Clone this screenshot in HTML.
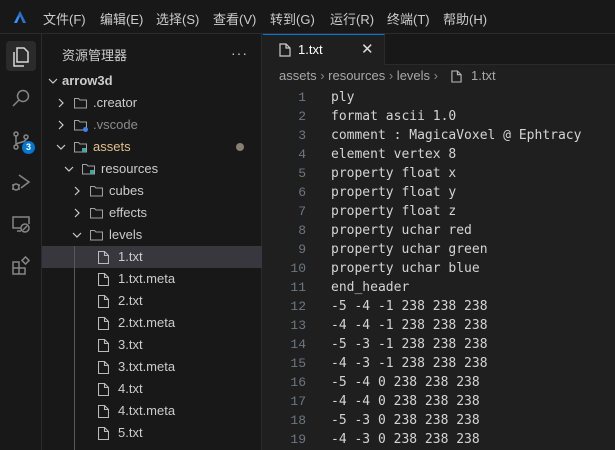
<!DOCTYPE html>
<html><head><meta charset="utf-8"><style>
*{margin:0;padding:0;box-sizing:border-box}
body{width:615px;height:450px;overflow:hidden;background:#1f1f1f;font-family:"Liberation Sans","Noto Sans CJK SC",sans-serif;color:#ccc;position:relative}
.abs{position:absolute}
svg{display:block}
#title{left:0;top:0;width:615px;height:34px;background:#181818;border-bottom:1px solid #2b2b2b}
#title span{position:absolute;top:9px;font-size:13px;color:#ccc}
#act{left:0;top:34px;width:42px;height:416px;background:#181818;border-right:1px solid #2b2b2b}
#side{left:42px;top:34px;width:220px;height:416px;background:#181818;border-right:1px solid #2b2b2b}
.row{position:absolute;left:0;width:220px;height:22px;font-size:13px;line-height:22px;color:#ccc}
.row .t{position:absolute;top:0}
.chev{position:absolute;top:6px}
.ic{position:absolute;top:5px}
#tabs{left:263px;top:34px;width:352px;height:31px;background:#181818;border-bottom:1px solid #2b2b2b}
#tab{left:263px;top:34px;width:122px;height:31px;background:#1f1f1f;border-top:1px solid #0078d4;border-right:1px solid #2b2b2b}
#crumb{left:263px;top:65px;width:352px;height:22px;font-size:13px;color:#a9a9a9}
.ln{position:absolute;left:263px;width:43px;text-align:right;font-family:"Liberation Mono",monospace;font-size:13px;color:#6e7681}
.cd{position:absolute;left:331px;font-family:"DejaVu Sans Mono","Liberation Mono",monospace;font-size:13px;color:#d4d4d4;white-space:pre}
</style></head><body>
<div id="title" class="abs">
<svg class="abs" style="left:13px;top:10px" width="14" height="14" viewBox="0 0 14 14"><path d="M7 1L1 13h3L7 6l3 7h3z" fill="#3794ff"/><path d="M7 1L4 7l3-1 3 7h3z" fill="#1a5fb4" opacity=".6"/></svg>
<span style="left:43px">文件(F)</span><span style="left:100px">编辑(E)</span><span style="left:156px">选择(S)</span><span style="left:213px">查看(V)</span><span style="left:270px">转到(G)</span><span style="left:330px">运行(R)</span><span style="left:387px">终端(T)</span><span style="left:443px">帮助(H)</span>
</div>
<div id="act" class="abs">
<div class="abs" style="left:6px;top:7px;width:30px;height:30px;background:#2b2b2b;border-radius:4px"></div>
<svg class="abs" style="left:10px;top:12px" width="22" height="22" viewBox="0 0 22 22" fill="none" stroke="#d7d7d7" stroke-width="1.5"><path d="M7 2h7l4 4v10H7z"/><path d="M4 6v14h10"/></svg>
<svg class="abs" style="left:11px;top:54px" width="20" height="20" viewBox="0 0 20 20" fill="none" stroke="#868686" stroke-width="1.5"><circle cx="12" cy="8" r="5.5"/><path d="M8 12l-6 6"/></svg>
<svg class="abs" style="left:11px;top:96px" width="20" height="20" viewBox="0 0 20 20" fill="none" stroke="#868686" stroke-width="1.5"><circle cx="5" cy="4" r="2"/><circle cx="5" cy="17" r="2"/><circle cx="15" cy="7" r="2"/><path d="M5 6v9M15 9c0 4-10 3-10 6"/></svg>
<div class="abs" style="left:22px;top:107px;width:13px;height:13px;background:#0078d4;border-radius:7px;color:#fff;font-size:9px;font-weight:bold;text-align:center;line-height:13px">3</div>
<svg class="abs" style="left:11px;top:138px" width="20" height="20" viewBox="0 0 20 20" fill="none" stroke="#868686" stroke-width="1.5"><path d="M8 3l10 7-8 6"/><circle cx="5" cy="15" r="3"/><path d="M1 13h2M1 17h2M7 13h2M7 17h2"/></svg>
<svg class="abs" style="left:11px;top:180px" width="20" height="20" viewBox="0 0 20 20" fill="none" stroke="#868686" stroke-width="1.5"><path d="M10 14H2V3h16v7M6 17h4"/><circle cx="14" cy="14" r="4"/><path d="M12 16l4-4"/></svg>
<svg class="abs" style="left:11px;top:222px" width="20" height="20" viewBox="0 0 20 20" fill="none" stroke="#868686" stroke-width="1.5"><path d="M2 6h6v12H2zM8 12h6v6H8M2 12h6"/><path d="M12 2l5 0 0 5-5 0z" transform="rotate(45 14.5 4.5)"/></svg>
</div>
<div id="side" class="abs">
<div class="abs" style="left:20px;top:11px;font-size:13px;color:#ccc">资源管理器</div>
<div class="abs" style="left:189px;top:11px;font-size:14px;color:#ccc;letter-spacing:1px">···</div>
<div class="abs" style="left:0;top:212px;width:220px;height:22px;background:#37373d"></div>
<div class="abs" style="left:32px;top:212px;width:1px;height:204px;background:#585858"></div>
<div id="tree"></div>
</div>
<div id="tabs" class="abs"></div>
<div id="tab" class="abs">
<svg class="abs" style="left:16px;top:8px" width="12" height="14" viewBox="0 0 12 14" fill="none" stroke="#ccc" stroke-width="1.2"><path d="M1 1h6l4 4v8H1zM7 1v4h4"/></svg>
<div class="abs" style="left:35px;top:7px;font-size:13px;color:#fff">1.txt</div>
<div class="abs" style="left:98px;top:5px;font-size:15px;color:#ddd">✕</div>
</div>
<div id="crumb" class="abs"><span class="abs" style="left:16px;top:3px;white-space:nowrap">assets <span style="color:#888">›</span> resources <span style="color:#888">›</span> levels <span style="color:#888">›</span></span>
<svg class="abs" style="left:188px;top:5px" width="11" height="13" viewBox="0 0 12 14" fill="none" stroke="#bbb" stroke-width="1.2"><path d="M1 1h6l4 4v8H1zM7 1v4h4"/></svg>
<span class="abs" style="left:208px;top:3px">1.txt</span></div>
<div id="code"></div>
<script>
var fold='<svg width="13" height="12" viewBox="0 0 13 12" fill="none" stroke="#a0a0a0" stroke-width="1.1"><path d="M.5 1.5h4l1.5 1.5h6.5v8H.5z"/></svg>';
var file='<svg width="11" height="13" viewBox="0 0 11 13" fill="none" stroke="#bbb" stroke-width="1.1"><path d="M.5.5h6l4 4v8H.5zM6.5.5v4h4"/></svg>';
function ch(open){return open?'<svg width="10" height="10" viewBox="0 0 10 10" fill="none" stroke="#ccc" stroke-width="1.2"><path d="M1 3l4 4 4-4"/></svg>':'<svg width="10" height="10" viewBox="0 0 10 10" fill="none" stroke="#ccc" stroke-width="1.2"><path d="M3 1l4 4-4 4"/></svg>'}
var rows=[[0,'arrow3d','open',0,'b'],[1,'.creator','c',1],[1,'.vscode','c',1,'v'],[1,'assets','open',1,'a'],[2,'resources','open',1,'r'],[3,'cubes','c',1],[3,'effects','c',1],[3,'levels','open',1],
[4,'1.txt',0,2],[4,'1.txt.meta',0,2],[4,'2.txt',0,2],[4,'2.txt.meta',0,2],[4,'3.txt',0,2],[4,'3.txt.meta',0,2],[4,'4.txt',0,2],[4,'4.txt.meta',0,2],[4,'5.txt',0,2]];
var h='';rows.forEach(function(r,i){var y=36+i*22,d=r[0],s='';
if(r[3]==0){s+='<span class="chev" style="left:6px">'+ch(1)+'</span><span class="t" style="left:20px;font-weight:bold">'+r[1]+'</span>';}
else if(r[3]==1){var cx=11+(d-1)*8;s+='<span class="chev" style="left:'+(cx+3)+'px">'+ch(r[2]=='open')+'</span><span class="ic" style="left:'+(cx+21)+'px">'+fold+'</span>';
if(r[4]=='v')s+='<span class="abs" style="left:'+(cx+30)+'px;top:13px;width:5px;height:5px;border-radius:3px;background:#3b82f6"></span>';
if(r[4]=='a'||r[4]=='r')s+='<span class="abs" style="left:'+(cx+29)+'px;top:12px;width:4px;height:4px;background:#3fa9a0"></span>';
var col=r[4]=='v'?'#8b8b8b':(r[4]=='a'?'#e2c08d':'#ccc');
s+='<span class="t" style="left:'+(cx+40)+'px;color:'+col+'">'+r[1]+'</span>';
if(r[4]=='a')s+='<span class="abs" style="left:194px;top:7px;width:8px;height:8px;border-radius:4px;background:#8a7f6e"></span>';}
else{s+='<span class="ic" style="left:56px">'+file+'</span><span class="t" style="left:76px">'+r[1]+'</span>';}
h+='<div class="row" style="top:'+y+'px">'+s+'</div>';});
document.getElementById('tree').innerHTML=h;
var L=['ply','format ascii 1.0','comment : MagicaVoxel @ Ephtracy','element vertex 8','property float x','property float y','property float z','property uchar red','property uchar green','property uchar blue','end_header','-5 -4 -1 238 238 238','-4 -4 -1 238 238 238','-5 -3 -1 238 238 238','-4 -3 -1 238 238 238','-5 -4 0 238 238 238','-4 -4 0 238 238 238','-5 -3 0 238 238 238','-4 -3 0 238 238 238'];
var c='';L.forEach(function(t,i){var y=90+i*19;c+='<div class="ln" style="top:'+y+'px">'+(i+1)+'</div><div class="cd" style="top:'+y+'px">'+t+'</div>';});
document.getElementById('code').innerHTML=c;
</script>
</body></html>
